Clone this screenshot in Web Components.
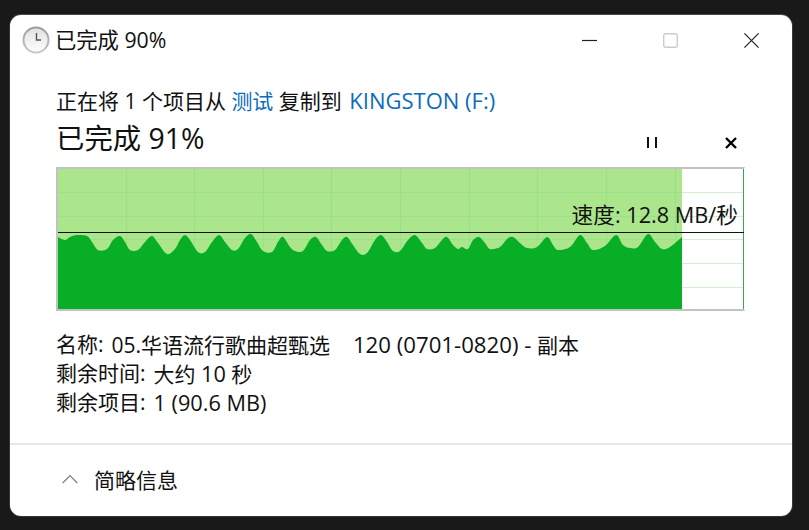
<!DOCTYPE html>
<html lang="zh">
<head>
<meta charset="utf-8">
<title>已完成 90%</title>
<style>
  html, body { margin: 0; height: 100%; background: #191919; overflow: hidden; }
  body { padding: 15px 17px 14px 10px; box-sizing: border-box; font-family: "Open Sans", "Noto Sans CJK SC", sans-serif; color: #111; }
  .lat { font-size: 21.7px; }
  .lat.wide { font-size: 22.2px; margin-left: 1px; }
</style>
</head>
<body>
<copy-dialog title-text="已完成 90%">
  <copy-summary percent="已完成 91%">正在将 1 个项目从 <a>测试</a> 复制到 <a class="drive">KINGSTON (F:)</a></copy-summary>
  <speed-graph speed="速度: 12.8 MB/秒"></speed-graph>
  <copy-details>
    <detail-row label="名称:">05.华语流行歌曲超甄选&nbsp;&nbsp;&nbsp;&nbsp;<span class="lat wide">120 (0701-0820) - </span>副本</detail-row>
    <detail-row label="剩余时间:">大约 <span class="lat">10</span> 秒</detail-row>
    <detail-row label="剩余项目:"><span class="lat">1 (90.6 MB)</span></detail-row>
  </copy-details>
</copy-dialog>

<script>
// window frame with title bar and footer
class CopyDialog extends HTMLElement {
  constructor() {
    super();
    this.attachShadow({ mode: "open" });
  }
  connectedCallback() {
    this.shadowRoot.innerHTML = `
      <style>
        :host { display: flex; flex-direction: column; height: 501px; background: #fff; border-radius: 11px; box-shadow: 0 -1px 0 #4a4a4a, 1px 0 0 #3a3a3a, 0 1px 0 #333, -1px 0 0 #333; }
        .bar { display: flex; align-items: center; height: 50px; padding: 0 33px 0 12px; }
        .title { font-size: 21.3px; margin-left: 5px; flex: 1; line-height: 50px; }
        .btns { display: flex; gap: 66px; align-items: center; }
        svg { display: block; }
        .body { flex: 1; padding: 0 47px 0 46px; }
        .foot { display: flex; align-items: center; height: 67px; border-top: 2px solid #e6e6e6; padding: 0 0 4px 52px; font-size: 21px; }
        .foot span { margin-left: 16px; }
      </style>
      <div class="bar">
        <svg width="28" height="28" viewBox="0 0 28 28">
          <defs>
            <linearGradient id="rim" x1="0" y1="0" x2="0" y2="1"><stop offset="0" stop-color="#9a9a9a"/><stop offset="1" stop-color="#c8c8c8"/></linearGradient>
            <linearGradient id="face" x1="0" y1="0" x2="0" y2="1"><stop offset="0" stop-color="#e2e2e2"/><stop offset="1" stop-color="#fdfdfd"/></linearGradient>
          </defs>
          <circle cx="14" cy="14" r="13.5" fill="url(#rim)"/>
          <circle cx="14" cy="14" r="11.5" fill="url(#face)"/>
          <path d="M14.5 7v7H19" fill="none" stroke="#555" stroke-width="1.4"/>
        </svg>
        <span class="title">${this.getAttribute("title-text")}</span>
        <div class="btns">
          <svg width="15" height="15" viewBox="0 0 15 15"><path d="M0 7.5h15" stroke="#222" stroke-width="1.2"/></svg>
          <svg width="15" height="15" viewBox="0 0 15 15"><rect x=".7" y=".7" width="13.6" height="13.6" rx="2" fill="none" stroke="#ccc" stroke-width="1.4"/></svg>
          <svg width="15" height="15" viewBox="0 0 15 15"><path d="M.4.4l14.2 14.2M14.6.4L.4 14.6" stroke="#222" stroke-width="1.2" fill="none"/></svg>
        </div>
      </div>
      <div class="body"><slot></slot></div>
      <div class="foot">
        <svg width="16" height="10" viewBox="0 0 16 10"><path d="M.7 9L8 1.6 15.3 9" fill="none" stroke="#808080" stroke-width="1.3"/></svg>
        <span>简略信息</span>
      </div>`;
  }
}
customElements.define("copy-dialog", CopyDialog);

// first line, big percent and pause / cancel
class CopySummary extends HTMLElement {
  constructor() {
    super();
    this.attachShadow({ mode: "open" });
  }
  connectedCallback() {
    this.shadowRoot.innerHTML = `
      <style>
        :host { display: block; padding-top: 20px; }
        .line { font-size: 21px; height: 31px; line-height: 30px; white-space: nowrap; }
        ::slotted(a) { color: #0a6cbd; }
        ::slotted(a.drive) { font-size: 22px; margin-left: 2px; }
        .row { display: flex; align-items: flex-start; height: 51px; }
        .pct { font-size: 28.4px; line-height: 44px; flex: 1; }
        .ctl { display: flex; gap: 67px; padding: 21px 8px 0 0; }
        svg { display: block; }
      </style>
      <div class="line"><slot></slot></div>
      <div class="row">
        <span class="pct">${this.getAttribute("percent")}</span>
        <div class="ctl">
          <svg width="12" height="12" viewBox="0 0 12 12"><path d="M2 0v11M10 0v11" stroke="#111" stroke-width="2"/></svg>
          <svg width="12" height="12" viewBox="0 0 12 12"><path d="M1 1l10 10M11 1L1 11" stroke="#000" stroke-width="2.4"/></svg>
        </div>
      </div>`;
  }
}
customElements.define("copy-summary", CopySummary);

// peaks read off the screenshot, in page coordinates
const WAVE = [[58,237],[65,240],[70,237],[77,235],[87,236],[92,242],[98,250],[107,249],[113,240],[120,236],[125,242],[130,250],[138,250],[145,242],[152,236],[158,243],[167,254],[175,249],[180,240],[185,235],[190,240],[198,252],[205,252],[212,242],[219,235],[225,242],[232,250],[238,249],[245,238],[251,234],[257,242],[263,251],[272,252],[278,242],[283,237],[290,247],[295,251],[303,251],[310,240],[316,237],[322,245],[327,251],[335,250],[342,240],[347,237],[353,245],[360,254],[367,253],[375,240],[381,235],[387,242],[393,251],[400,251],[408,240],[415,235],[422,243],[427,249],[435,248],[442,240],[447,237],[453,245],[458,249],[462,247],[468,249],[473,240],[479,237],[485,243],[490,249],[500,247],[507,239],[513,237],[520,243],[527,248],[537,247],[547,237],[553,245],[558,250],[570,247],[580,235],[587,243],[593,250],[605,246],[616,235],[623,245],[630,248],[638,247],[648,234],[655,242],[662,249],[670,247],[682,237]];

function smooth(p) {
  let d = `M${p[0][0]} ${p[0][1]}`;
  for (let i = 0; i < p.length - 1; i++) {
    const a = p[i - 1] || p[i], b = p[i], c = p[i + 1], e = p[i + 2] || c;
    d += `C${b[0] + (c[0] - a[0]) / 6} ${b[1] + (c[1] - a[1]) / 6} ${c[0] - (e[0] - b[0]) / 6} ${c[1] - (e[1] - b[1]) / 6} ${c[0]} ${c[1]}`;
  }
  return d;
}

class SpeedGraph extends HTMLElement {
  constructor() {
    super();
    this.attachShadow({ mode: "open" });
  }
  connectedCallback() {
    const hs = [192, 216, 239, 263, 287].map(y => `<path d="M58 ${y + .5}H744"/>`).join("");
    const vs = [126, 194, 263, 331, 400, 469, 537, 606, 675].map(x => `<path d="M${x + .5} 169V309"/>`).join("");
    this.shadowRoot.innerHTML = `
      <style>
        :host { display: block; position: relative; width: 686px; height: 140px; border: 2px solid #c2c2c2; border-right: 1px solid transparent; background: #fff; }
        svg { display: block; }
        .speed { position: absolute; right: 6px; top: 31px; font-size: 21.7px; line-height: 30px; color: #111; white-space: nowrap; }
      </style>
      <svg width="686" height="140" viewBox="58 169 686 140">
        <g stroke="#d4eed0" stroke-width="1">${hs}</g>
        <rect x="58" y="169" width="624" height="140" fill="#ace68c"/>
        <g clip-path="url(#cl)" stroke="#9be08a" stroke-width="1.2">${hs}${vs}</g>
        <clipPath id="cl"><rect x="58" y="169" width="624" height="140"/></clipPath>
        <path d="${smooth(WAVE)}V309H58Z" fill="#07ae26"/>
        <path d="M743.5 169V309" stroke="#3aa655" stroke-width="1"/>
        <path d="M58 232.5H744" stroke="#111" stroke-width="1"/>
      </svg>
      <span class="speed">${this.getAttribute("speed")}</span>`;
  }
}
customElements.define("speed-graph", SpeedGraph);

class CopyDetails extends HTMLElement {
  constructor() {
    super();
    this.attachShadow({ mode: "open" });
  }
  connectedCallback() {
    this.shadowRoot.innerHTML = `
      <style>:host { display: block; padding-top: 19px; }</style>
      <slot></slot>`;
  }
}
customElements.define("copy-details", CopyDetails);

class DetailRow extends HTMLElement {
  constructor() {
    super();
    this.attachShadow({ mode: "open" });
  }
  connectedCallback() {
    this.shadowRoot.innerHTML = `
      <style>
        :host { display: flex; gap: 8px; font-size: 21px; height: 29px; line-height: 29px; white-space: nowrap; }
      </style>
      <span>${this.getAttribute("label")}</span>
      <span><slot></slot></span>`;
  }
}
customElements.define("detail-row", DetailRow);
</script>
</body>
</html>
